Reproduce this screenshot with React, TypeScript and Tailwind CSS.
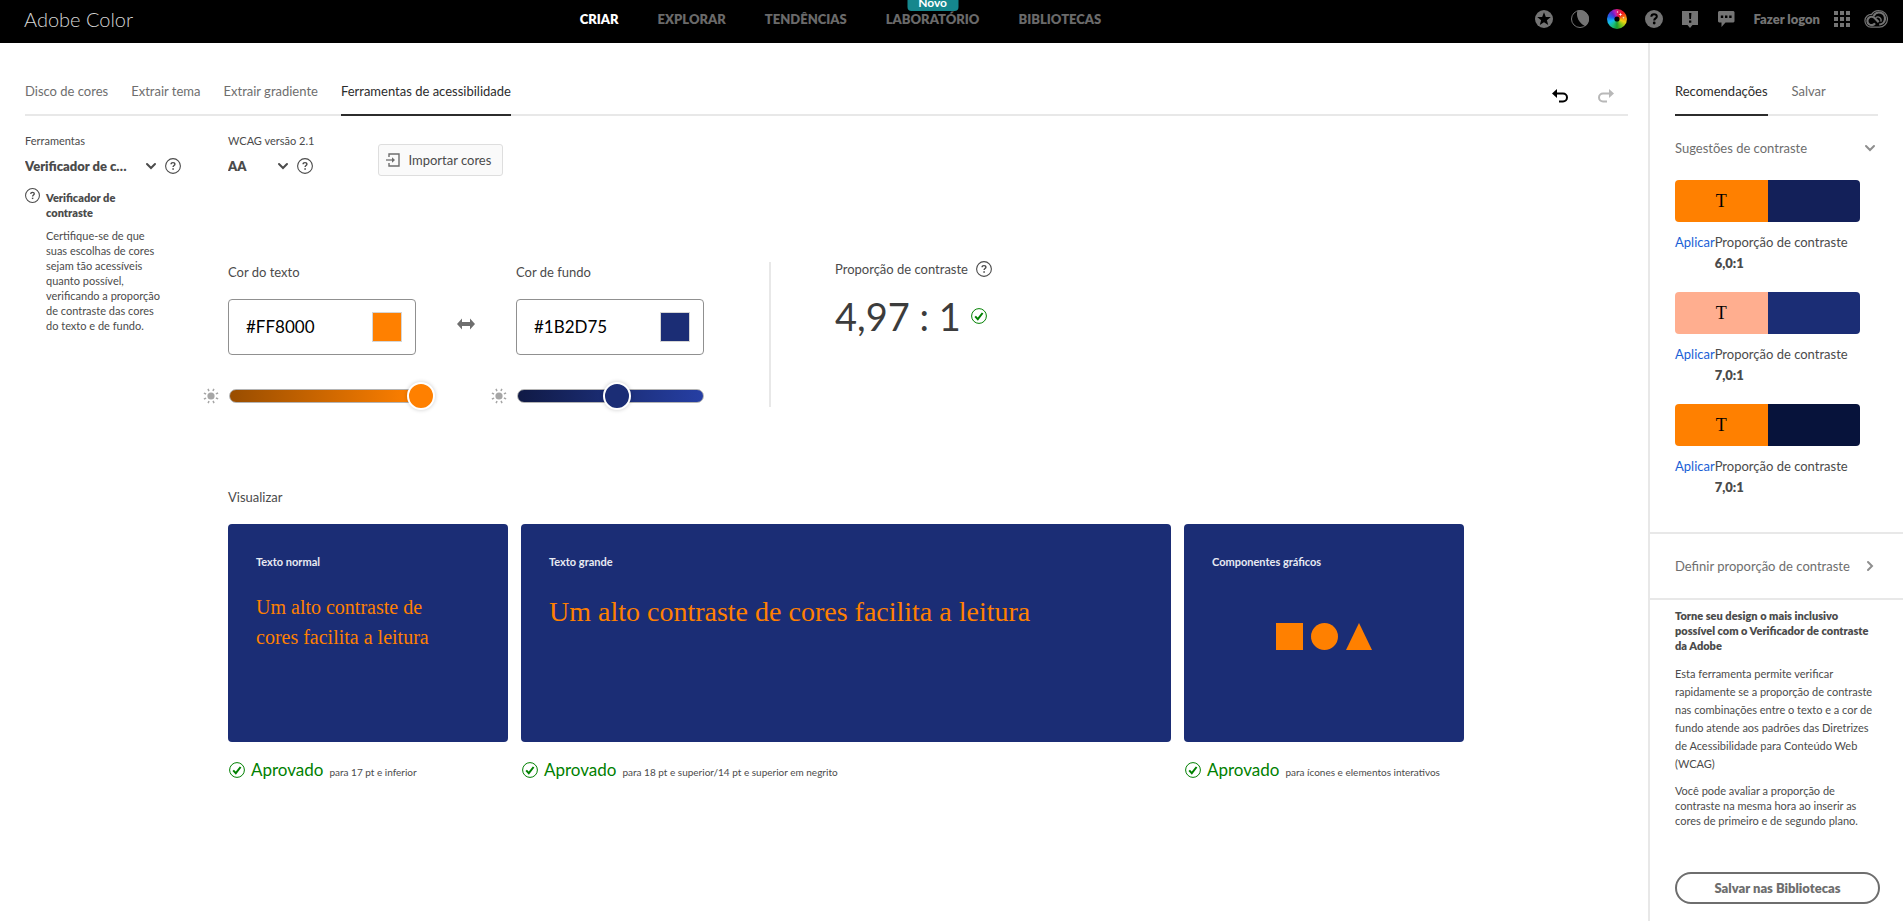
import React from 'react';

const HelpIcon = ({ className = 'size-4' }: { className?: string }) => (
  <svg viewBox="0 0 16 16" className={className} fill="none" stroke="currentColor" aria-hidden="true">
    <circle cx="8" cy="8" r="7.4" strokeWidth="1.1" />
    <path d="M6.1 6.3C6.1 5.2 6.9 4.6 8 4.6s1.9.6 1.9 1.6c0 1.3-1.8 1.4-1.8 2.8" strokeWidth="1.4" />
    <path d="M8.1 10.3v1.5" strokeWidth="1.6" />
  </svg>
);

const CheckIcon = () => (
  <svg viewBox="0 0 16 16" className="size-4 shrink-0" fill="none" stroke="#008000" aria-hidden="true">
    <circle cx="8" cy="8" r="7.4" strokeWidth="1" />
    <path d="M4.2 8.4l2.6 2.8 4.8-6.2" strokeWidth="2" />
  </svg>
);

const Chevron = ({ className = '' }: { className?: string }) => (
  <svg viewBox="0 0 12 12" className={'size-3 shrink-0 ' + className} fill="none" stroke="currentColor" strokeWidth="2" strokeLinecap="round" aria-hidden="true">
    <path d="M2 4l4 4 4-4" />
  </svg>
);

const SunIcon = () => (
  <svg viewBox="0 0 16 16" className="size-4 shrink-0 text-[#a6a6a6]" aria-hidden="true">
    <circle cx="8" cy="8" r="3.6" fill="currentColor" />
    <g stroke="currentColor" strokeWidth="1.5">
      {[22, 67, 112, 157, 202, 247, 292, 337].map((a) => (
        <path key={a} d="M8 0.3v2.4" transform={`rotate(${a} 8 8)`} />
      ))}
    </g>
  </svg>
);

const StarIcon = () => (
  <svg viewBox="0 0 18 18" className="size-[18px]" aria-hidden="true">
    <circle cx="9" cy="9" r="9" fill="#747474" />
    <path d="M9 2.2l1.8 4.7 5 .2-3.900 3.100 1.300 4.900L9 12.300l-4.200 2.800 1.300-4.900L2.200 7.100l5-.2z" fill="#000" />
  </svg>
);

const MoonIcon = () => (
  <svg viewBox="0 0 18 18" className="size-[18px]" aria-hidden="true">
    <circle cx="9" cy="9" r="8.5" fill="#000" stroke="#747474" />
    <path d="M6.500.4a9 9 0 0 1 8 15.800C8.500 13.500 4.500 7 6.500.4z" fill="#747474" />
  </svg>
);

const WheelIcon = () => (
  <span className="relative block size-5 rounded-full bg-[conic-gradient(from_0deg,#d81b7a,#f01818_45deg,#f58a12_80deg,#f2d313_110deg,#7ac41c_145deg,#1a9c2c_180deg,#19c08a_215deg,#14b9ef_250deg,#1c64e8_285deg,#5a26c8_320deg,#b31fbd_345deg,#d81b7a)]">
    <svg viewBox="0 0 20 20" className="size-5" aria-hidden="true">
      <circle cx="10" cy="10" r="2.600" fill="#000" />
      <path d="M13.500 3.500l.5 1.500 1.500.5-1.500.5-.5 1.500-.5-1.500-1.500-.5 1.500-.5z M16.500 7.500l.3 1 1 .3-1 .3-.3 1-.3-1-1-.3 1-.3z M10.500 1.800l.3.900.9.300-.9.300-.3.900-.3-.9-.9-.3.900-.3z" fill="#fff" />
    </svg>
  </span>
);

const QuestionSolid = () => (
  <svg viewBox="0 0 18 18" className="size-[18px]" aria-hidden="true">
    <circle cx="9" cy="9" r="9" fill="#747474" />
    <path d="M6.300 6.700C6.400 4.900 7.500 4.200 9 4.200s2.800.8 2.800 2.200c0 2-2.600 2-2.600 4" fill="none" stroke="#000" strokeWidth="2" />
    <circle cx="9.200" cy="13" r="1.400" fill="#000" />
  </svg>
);

const AlertIcon = () => (
  <svg viewBox="0 0 18 18" className="size-[18px]" aria-hidden="true">
    <path d="M1 1h16v14h-5.500L9 18l-2.500-3H1z" fill="#747474" />
    <path d="M8 3h2.400l-.4 6H8.400z M8 10.500h2.300v2.300H8z" fill="#000" />
  </svg>
);

const ChatIcon = () => (
  <svg viewBox="0 0 18 18" className="size-[18px]" aria-hidden="true">
    <path d="M2 1h14.500l1 1v9.500l-1 1H8.500L4.500 17v-4.500H2l-1-1V2z" fill="#747474" />
    <path d="M3.800 5.500h2.400v2.400H3.800z M8 5.500h2.400v2.400H8z M12.200 5.500h2.400v2.400h-2.400z" fill="#000" />
  </svg>
);

const AppsIcon = () => (
  <svg viewBox="0 0 16 16" className="size-4" fill="#747474" aria-hidden="true">
    {[0, 6, 12].map((y) => [0, 6, 12].map((x) => <rect key={`${x}-${y}`} x={x} y={y} width="4" height="4" />))}
  </svg>
);

const CloudIcon = () => (
  <svg viewBox="0 0 24 18" className="h-[18px] w-6" fill="none" stroke="#747474" aria-hidden="true">
    <path d="M7.700 4.400A8.200 8.200 0 0 1 15.200.7a8.200 8.200 0 0 1 0 16.500H7a6.400 6.400 0 0 1 .7-12.800z" strokeWidth="1.200" />
    <path d="M11 13.400a4.200 4.200 0 1 1-.6-5.600l4.300 4.300" strokeWidth="2.200" />
    <path d="M9.600 5.900a6 6 0 1 1 5.600 8.600" strokeWidth="2.200" />
    <path d="M11.900 7.600a3.200 3.200 0 0 1 4.800 4" strokeWidth="1.300" />
  </svg>
);

const UndoIcon = () => (
  <svg viewBox="0 0 16 14" className="h-[14px] w-4" aria-hidden="true">
    <path d="M4 4.500h7a4 4 0 0 1 0 8H7" fill="none" stroke="currentColor" strokeWidth="2" />
    <path d="M5 0v9L0 4.500z" fill="currentColor" />
  </svg>
);

const ImportIcon = () => (
  <svg viewBox="0 0 14 14" className="size-[14px] text-[#6e6e6e]" fill="none" stroke="currentColor" aria-hidden="true">
    <path d="M3 4V1h10v12H3v-3" strokeWidth="1.400" />
    <path d="M0 7h6.500" strokeWidth="1.300" />
    <path d="M6 4.300l3 2.700-3 2.700z" fill="currentColor" stroke="none" />
  </svg>
);

const SwapIcon = () => (
  <svg viewBox="0 0 18 12" className="h-3 w-[18px]" fill="#6e6e6e" aria-hidden="true">
    <path d="M0 6l5-5.500V4h8V.5L18 6l-5 5.500V8H5v3.500z" />
  </svg>
);

const navItems = ['CRIAR', 'EXPLORAR', 'TENDÊNCIAS', 'LABORATÓRIO', 'BIBLIOTECAS'];

function Header() {
  return (
    <header className="grid h-[43px] grid-cols-[1fr_auto_1fr] items-center bg-black pb-[5px]">
      <a href="#inicio" className="pl-6 text-xl font-light leading-6 text-[#d6d6d6]">Adobe Color</a>
      <nav className="flex gap-[39px] pr-[222px] text-[13px] font-extrabold leading-5">
        {navItems.map((item) => (
          <a key={item} href={'#' + item.toLowerCase()} className={item === 'CRIAR' ? 'text-white' : 'relative text-[#6a6a6a]'}>
            {item}
            {item === 'LABORATÓRIO' && (
              <span className="absolute -top-[18px] left-1/2 flex h-5 w-[51px] -translate-x-1/2 items-center justify-center rounded-[4px] bg-[#15878d] pt-1 text-xs font-bold leading-4 text-white">Novo</span>
            )}
          </a>
        ))}
      </nav>
      <div className="flex items-center justify-end gap-[18px] pr-[15px]">
        <button aria-label="Novidades"><StarIcon /></button>
        <button aria-label="Tema"><MoonIcon /></button>
        <button aria-label="Disco de cores"><WheelIcon /></button>
        <button aria-label="Ajuda"><QuestionSolid /></button>
        <button aria-label="Avisos"><AlertIcon /></button>
        <button aria-label="Comentários"><ChatIcon /></button>
        <div className="flex items-center gap-[14px]">
          <a href="#logon" className="text-[13px] font-extrabold leading-5 text-[#747474]">Fazer logon</a>
          <button aria-label="Aplicativos"><AppsIcon /></button>
          <button aria-label="Creative Cloud"><CloudIcon /></button>
        </div>
      </div>
    </header>
  );
}

const tabClass = 'flex h-full items-center border-b-2';

function Tabs({ items, active, gap, children }: { items: string[]; active: string; gap: string; children?: React.ReactNode }) {
  return (
    <div className="flex h-[49px] items-center justify-between shadow-[inset_0_-2px_0_#e8e8e8]">
      <div className={'flex h-full text-[13px] leading-5 ' + gap} role="tablist">
        {items.map((t) => (
          <button key={t} role="tab" aria-selected={t === active} className={`${tabClass} ${t === active ? 'border-[#2c2c2c] text-[#2c2c2c]' : 'border-transparent text-[#6e6e6e]'}`}>
            {t}
          </button>
        ))}
      </div>
      {children}
    </div>
  );
}

function Picker({ id, label, options, width }: { id: string; label: string; options: string[]; width: string }) {
  return (
    <div className="flex flex-col gap-[7px]">
      <label htmlFor={id} className="text-[11px] leading-4 text-[#4b4b4b]">{label}</label>
      <div className="flex items-center gap-2 text-[#4b4b4b]">
        <div className={'grid items-center ' + width}>
          <select id={id} className="col-start-1 row-start-1 w-full appearance-none truncate bg-transparent pr-[26px] text-[13px] font-extrabold leading-5">
            {options.map((o) => <option key={o}>{o}</option>)}
          </select>
          <Chevron className="pointer-events-none col-start-1 row-start-1 justify-self-end" />
        </div>
        <button aria-label="Ajuda"><HelpIcon className="block size-4" /></button>
      </div>
    </div>
  );
}

type ColorFieldProps = { id: string; label: string; value: string; swatch: string; track: string; level: number; thumb: string };

function ColorField({ id, label, value, swatch, track, level, thumb }: ColorFieldProps) {
  return (
    <div className="flex w-[188px] flex-col">
      <label htmlFor={id} className="text-[13px] leading-5 text-[#4b4b4b]">{label}</label>
      <div className="mt-[17px] flex h-14 items-center justify-between rounded border border-[#909090] pl-[17px] pr-[13px]">
        <input id={id} defaultValue={value} className="w-24 text-[17px] leading-6 text-black outline-none" />
        <button aria-label={'Escolher ' + label} className={'size-[30px] border border-[#d5d5d5] ' + swatch} />
      </div>
      <div className="-ml-[25px] mt-[29px] flex h-6 items-center gap-[10px]">
        <SunIcon />
        <div className={'flex h-[14px] w-[187px] shrink-0 items-center rounded-full border border-[#b4b4b4] ' + track}>
          <input
            type="range"
            aria-label={'Brilho: ' + label}
            defaultValue={level}
            className={`h-7 w-[205px] shrink-0 appearance-none bg-transparent [&::-webkit-slider-thumb]:size-7 [&::-webkit-slider-thumb]:appearance-none [&::-webkit-slider-thumb]:rounded-full [&::-webkit-slider-thumb]:border-2 [&::-webkit-slider-thumb]:border-white [&::-webkit-slider-thumb]:shadow-[0_0_4px_rgba(0,0,0,0.2)] ${thumb}`}
          />
        </div>
      </div>
    </div>
  );
}

function Preview({ title, note, children }: { title: string; note: string; children: React.ReactNode }) {
  return (
    <div className="min-w-0">
      <div className="h-[218px] rounded bg-[#1b2d75] px-7 pt-7">
        <h3 className="text-[11px] font-bold leading-5 text-[#e8eaf2]">{title}</h3>
        {children}
      </div>
      <div className="mt-4 flex h-6 items-center gap-[6px] pl-px">
        <CheckIcon />
        <span className="text-[17px] leading-6 text-[#008000]">Aprovado</span>
        <span className="pt-[3px] text-[10px] leading-4 text-[#4b4b4b]">{note}</span>
      </div>
    </div>
  );
}

const suggestions = [
  { fg: 'bg-[#ff8000]', bg: 'bg-[#132059]', ratio: '6,0:1' },
  { fg: 'bg-[#ffae8f]', bg: 'bg-[#1b2d75]', ratio: '7,0:1' },
  { fg: 'bg-[#ff8000]', bg: 'bg-[#07133b]', ratio: '7,0:1' },
];

function Sidebar() {
  return (
    <aside className="flex w-[255px] shrink-0 flex-col border-l-2 border-[#e8e8e8] pt-6">
      <div className="pl-[25px] pr-[25px]">
        <Tabs items={['Recomendações', 'Salvar']} active="Recomendações" gap="gap-6" />
        <button className="mt-[22px] flex w-full items-center justify-between pr-[2px] text-[13px] leading-5 text-[#6e6e6e]">
          Sugestões de contraste
          <Chevron className="text-[#8e8e8e]" />
        </button>
      </div>
      <ul className="flex flex-col gap-[18px] pb-[34px] pl-[25px] pr-[43px] pt-[22px]">
        {suggestions.map((s, i) => (
          <li key={i}>
            <div className="flex h-[42px] overflow-hidden rounded">
              <div className={'flex flex-1 items-center justify-center font-["Liberation_Serif",serif] text-lg leading-6 text-black ' + s.fg}>T</div>
              <div className={'flex-1 ' + s.bg} />
            </div>
            <div className="mt-[10px] flex items-start text-[13px] leading-[21px] text-[#4b4b4b]">
              <a href="#aplicar" className="text-[#1a5fd6]">Aplicar</a>
              <p>Proporção de contraste<br /><b className="font-extrabold">{s.ratio}</b></p>
            </div>
          </li>
        ))}
      </ul>
      <button className="flex h-[68px] items-center justify-between border-y-2 border-[#e8e8e8] pl-[25px] pr-[27px] text-[13px] leading-5 text-[#6e6e6e]">
        Definir proporção de contraste
        <Chevron className="-rotate-90 text-[#8e8e8e]" />
      </button>
      <div className="pl-[25px] pr-[22px] pt-2 text-[11px] text-[#4b4b4b]">
        <h2 className="pr-[2px] font-extrabold leading-[15px]">Torne seu design o mais inclusivo possível com o Verificador de contraste da Adobe</h2>
        <p className="mt-3 leading-[18px]">Esta ferramenta permite verificar rapidamente se a proporção de contraste nas combinações entre o texto e a cor de fundo atende aos padrões das Diretrizes de Acessibilidade para Conteúdo Web (WCAG)</p>
        <p className="mt-[10px] leading-[15px]">Você pode avaliar a proporção de contraste na mesma hora ao inserir as cores de primeiro e de segundo plano.</p>
      </div>
      <div className="pl-[25px] pr-[23px] pt-11">
        <button className="h-8 w-full rounded-full border-2 border-[#6e6e6e] text-[13px] font-extrabold leading-5 text-[#6e6e6e]">Salvar nas Bibliotecas</button>
      </div>
    </aside>
  );
}

export default function App() {
  return (
    <div className='flex min-h-screen flex-col bg-white font-["Lato",sans-serif] text-[#4b4b4b]'>
      <Header />
      <div className="flex flex-1">
        <main className="min-w-0 flex-1 pl-[25px] pr-5 pt-6">
          <Tabs items={['Disco de cores', 'Extrair tema', 'Extrair gradiente', 'Ferramentas de acessibilidade']} active="Ferramentas de acessibilidade" gap="gap-[23px]">
            <div className="flex items-center gap-[30px] pr-[14px] pt-2">
              <button aria-label="Desfazer" className="text-black"><UndoIcon /></button>
              <button aria-label="Refazer" className="-scale-x-100 text-[#b8b8b8]"><UndoIcon /></button>
            </div>
          </Tabs>

          <div className="flex">
            <div className="w-[203px] shrink-0 pt-[17px]">
              <Picker id="ferramenta" label="Ferramentas" options={['Verificador de contraste']} width="w-[132px]" />
              <div className="mt-3 flex gap-[6px]">
                <HelpIcon className="block size-[15px] shrink-0" />
                <div className="w-[118px] pt-[2px] text-[11px] leading-[15px]">
                  <h2 className="w-20 font-extrabold">Verificador de contraste</h2>
                  <p className="mt-2">Certifique-se de que suas escolhas de cores sejam tão acessíveis quanto possível, verificando a proporção de contraste das cores do texto e de fundo.</p>
                </div>
              </div>
            </div>

            <div className="w-full max-w-[1236px] pt-[17px]">
              <div className="flex items-start gap-16">
                <Picker id="wcag" label="WCAG versão 2.1" options={['AA', 'AAA']} width="w-[61px]" />
                <button className="mt-[11px] flex h-8 items-center gap-2 rounded-[3px] border border-[#dedede] bg-[#fafafa] pl-[7px] pr-[11px] text-[13px] leading-5 text-[#4b4b4b]">
                  <ImportIcon />
                  Importar cores
                </button>
              </div>

              <div className="mt-[86px] flex items-start">
                <div className="flex">
                  <ColorField id="texto" label="Cor do texto" value="#FF8000" swatch="bg-[#ff8000]" level={100} track="bg-[linear-gradient(90deg,#994d00,#ff8000)]" thumb="[&::-webkit-slider-thumb]:bg-[#ff8000]" />
                  <button aria-label="Trocar cores" className="mx-[41px] mt-14 h-3"><SwapIcon /></button>
                  <ColorField id="fundo" label="Cor de fundo" value="#1B2D75" swatch="bg-[#1b2d75]" level={48} track="bg-[linear-gradient(90deg,#101a45,#1b2d75_50%,#263fa4)]" thumb="[&::-webkit-slider-thumb]:bg-[#1b2d75]" />
                </div>
                <div className="ml-[65px] h-[145px] border-l-2 border-[#e8e8e8] pl-16">
                  <div className="flex h-[14px] items-center gap-2 text-[13px] leading-5">
                    Proporção de contraste
                    <button aria-label="Ajuda"><HelpIcon className="block size-4" /></button>
                  </div>
                  <div className="mt-4 flex items-center gap-[10px]">
                    <span className="text-[38px] leading-[48px] text-[#3c3c3c]">4,97 : 1</span>
                    <CheckIcon />
                  </div>
                </div>
              </div>

              <h2 className="mt-[79px] text-[13px] leading-5">Visualizar</h2>
              <div className="mt-[17px] grid grid-cols-[280fr_650fr_280fr] gap-[13px]">
                <Preview title="Texto normal" note="para 17 pt e inferior">
                  <p className='mt-5 max-w-[190px] font-["Liberation_Serif",serif] text-xl leading-[30px] text-[#ff8000]'>Um alto contraste de cores facilita a leitura</p>
                </Preview>
                <Preview title="Texto grande" note="para 18 pt e superior/14 pt e superior em negrito">
                  <p className='mt-5 font-["Liberation_Serif",serif] text-[28px] leading-[40px] text-[#ff8000]'>Um alto contraste de cores facilita a leitura</p>
                </Preview>
                <Preview title="Componentes gráficos" note="para ícones e elementos interativos">
                  <svg viewBox="0 0 96 27" className="mx-auto mt-[51px] h-[27px] w-24" fill="#ff8000" aria-hidden="true">
                    <rect width="27" height="27" />
                    <circle cx="48.500" cy="13.500" r="13.500" />
                    <path d="M83 0l13 27H70z" />
                  </svg>
                </Preview>
              </div>
            </div>
          </div>
        </main>
        <Sidebar />
      </div>
    </div>
  );
}
